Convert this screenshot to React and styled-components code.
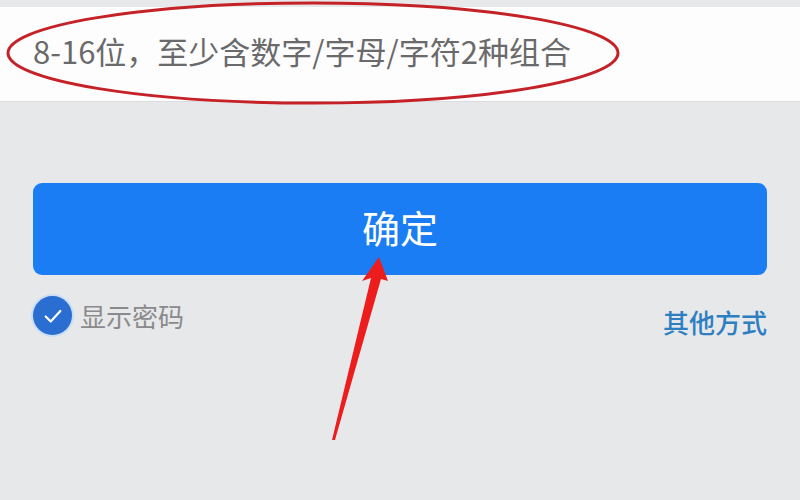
import React from 'react';
import styled, { createGlobalStyle } from 'styled-components';

const Global = createGlobalStyle`
  html, body {
    margin: 0;
    padding: 0;
    background: #e7e8ea;
  }
  body {
    font-family: "Noto Sans CJK SC", "Noto Sans", sans-serif;
  }
`;

const Page = styled.div`
  position: relative;
  width: 800px;
  height: 500px;
  overflow: hidden;
  background: #e7e8ea;
  padding-top: 7px;
  box-sizing: border-box;
`;

const InputBand = styled.div`
  position: relative;
  height: 94px;
  background: #fdfdfd;
  display: flex;
  align-items: center;
  padding: 0 33px;
  border-bottom: 1px solid #dcdcde;
`;

const Placeholder = styled.div`
  font-size: 31px;
  color: #6a6a6c;
  letter-spacing: 0;
  margin-top: -7px;
`;

const Body = styled.div`
  padding: 81px 33px 0;
`;

const Confirm = styled.button`
  width: 100%;
  height: 92px;
  border: none;
  border-radius: 9px;
  background: #1b7df3;
  color: #fff;
  font-family: inherit;
  font-size: 38px;
  display: flex;
  align-items: center;
  justify-content: center;
  padding-bottom: 6px;
`;

const Options = styled.div`
  display: flex;
  justify-content: space-between;
  align-items: center;
  margin-top: 16px;
`;

const ShowPwd = styled.label`
  display: flex;
  align-items: center;
  gap: 8px;
  font-size: 26px;
  color: #8a8a8c;
`;

const Check = styled.span`
  width: 39px;
  height: 39px;
  border-radius: 50%;
  background: #2a6ed2;
  box-shadow: 0 0 0 2px #c9def6;
  display: flex;
  align-items: center;
  justify-content: center;
`;

const OtherLink = styled.a`
  font-size: 26px;
  font-weight: 500;
  color: #2d7fc2;
  margin-top: 12px;
`;

const Overlay = styled.svg`
  position: absolute;
  left: 0;
  top: 0;
  pointer-events: none;
`;

export default function App() {
  return (
    <Page>
      <Global />
      <InputBand>
        <Placeholder>8-16位，至少含数字/字母/字符2种组合</Placeholder>
      </InputBand>
      <Body>
        <Confirm>确定</Confirm>
        <Options>
          <ShowPwd>
            <Check>
              <svg width="22" height="22" viewBox="0 0 24 24" fill="none" stroke="#fff" strokeWidth="2.4" strokeLinecap="round" strokeLinejoin="round">
                <polyline points="4,12.5 9.5,18 20,6.5" />
              </svg>
            </Check>
            显示密码
          </ShowPwd>
          <OtherLink>其他方式</OtherLink>
        </Options>
      </Body>
      <Overlay width="800" height="500" viewBox="0 0 800 500">
        <ellipse cx="313" cy="53" rx="305" ry="50" fill="none" stroke="#c42227" strokeWidth="3" />
        <polygon points="379,257 388,281 381,279 335,440 332,440 371,278 362,281" fill="#ee1d1d" />
      </Overlay>
    </Page>
  );
}
